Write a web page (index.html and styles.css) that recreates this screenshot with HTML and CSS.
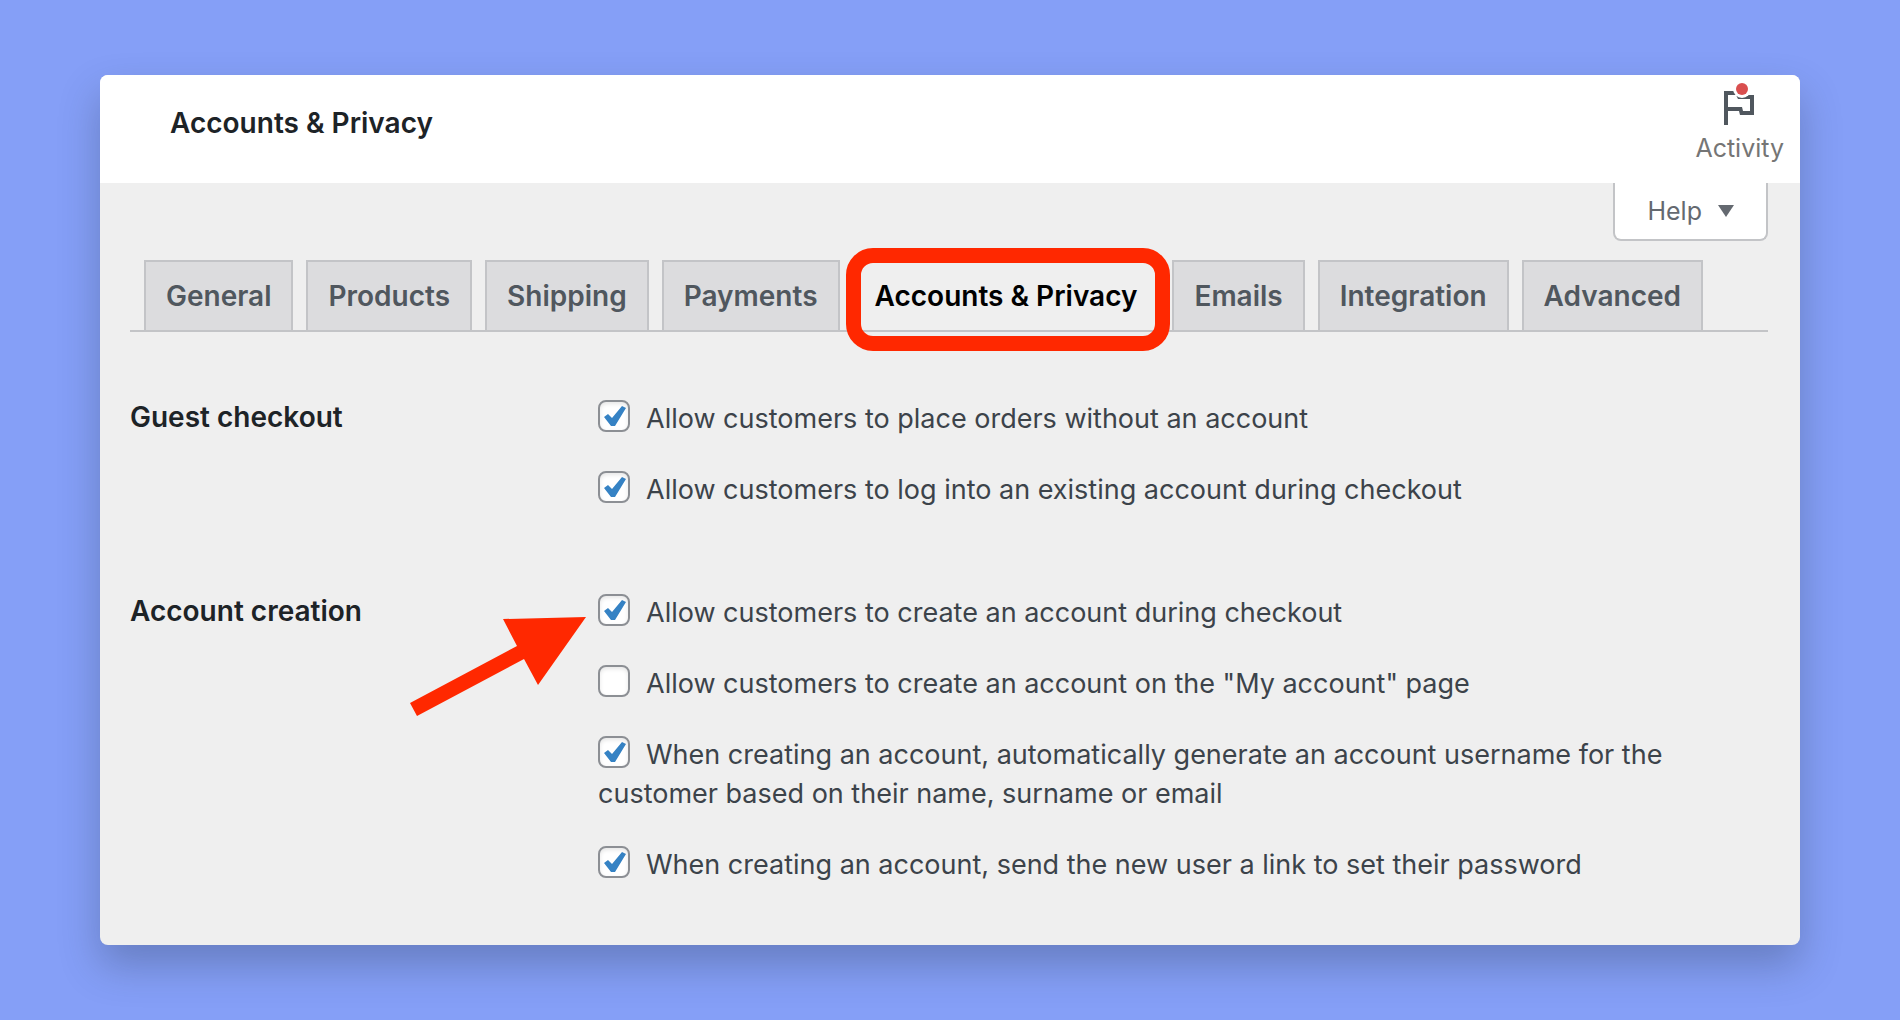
FILE: index.html
```html
<!DOCTYPE html>
<html lang="en">
<head>
    <meta charset="UTF-8">
    <meta name="viewport" content="width=device-width, initial-scale=1.0">
    <title>Accounts &amp; Privacy</title>
    <link rel="stylesheet" href="styles.css">
</head>
<body>
    <main class="panel">
        <header class="panel-header">
            <h1>Accounts &amp; Privacy</h1>
            <button type="button" class="activity">
                <svg class="activity-icon" width="40" height="44" viewBox="0 0 40 44" aria-hidden="true">
                    <path d="M4 10H18L20 14H34V34H20L19 30H8V44H4ZM8 14V26H22L23 30H30V18H18L16 14Z" fill="#50575e" fill-rule="evenodd"/>
                    <circle cx="22" cy="8" r="9" fill="#fff"/>
                    <circle cx="22" cy="8" r="6" fill="#d94f4f"/>
                </svg>
                Activity
            </button>
        </header>
        <div class="content">
            <div class="help-bar">
                <button type="button" class="help">
                    Help
                    <svg width="16" height="12" viewBox="0 0 16 12" aria-hidden="true">
                        <path d="M0 0H16L8 12Z" fill="#646970"/>
                    </svg>
                </button>
            </div>
            <nav class="tabs">
                <a href="#" class="tab">General</a>
                <a href="#" class="tab">Products</a>
                <a href="#" class="tab">Shipping</a>
                <a href="#" class="tab">Payments</a>
                <a href="#" class="tab active">Accounts &amp; Privacy</a>
                <a href="#" class="tab">Emails</a>
                <a href="#" class="tab">Integration</a>
                <a href="#" class="tab">Advanced</a>
            </nav>
            <form class="settings">
                <section class="setting">
                    <h2>Guest checkout</h2>
                    <div class="options">
                        <label for="guest-order"><input type="checkbox" id="guest-order" checked>Allow customers to place orders without an account</label>
                        <label for="guest-login"><input type="checkbox" id="guest-login" checked>Allow customers to log into an existing account during checkout</label>
                    </div>
                </section>
                <section class="setting">
                    <h2>Account creation</h2>
                    <div class="options">
                        <svg class="arrow" width="176" height="100" viewBox="0 0 176 100" aria-hidden="true">
                            <path d="M176 0L93 2L107 29L0 86L7 99L114 42L128 68Z" fill="#ff2800"/>
                        </svg>
                        <label for="create-checkout"><input type="checkbox" id="create-checkout" checked>Allow customers to create an account during checkout</label>
                        <label for="create-my-account"><input type="checkbox" id="create-my-account">Allow customers to create an account on the "My account" page</label>
                        <label for="auto-username"><input type="checkbox" id="auto-username" checked>When creating an account, automatically generate an account username for the customer based on their name, surname or email</label>
                        <label for="send-link"><input type="checkbox" id="send-link" checked>When creating an account, send the new user a link to set their password</label>
                    </div>
                </section>
            </form>
        </div>
    </main>
</body>
</html>
```
FILE: styles.css
```css
* {
    box-sizing: border-box;
}
body {
    font-family: Inter, sans-serif;
    font-size: 27px;
    line-height: 39px;
    color: #3c434a;
    background-color: #859ff7;
    margin: 0;
    padding: 75px 100px;
}
h1, h2 {
    margin: 0;
    font-size: 28px;
    font-weight: 600;
    line-height: 36px;
    color: #1d2327;
}
button {
    font-family: inherit;
    font-size: 25px;
    background: none;
    border: none;
    padding: 0;
    cursor: pointer;
}
.panel {
    background: #efefef;
    border-radius: 8px;
    box-shadow: 0 20px 40px rgba(40, 55, 80, 0.32);
}
.panel-header {
    display: flex;
    justify-content: space-between;
    background: #ffffff;
    border-radius: 8px 8px 0 0;
    height: 108px;
    padding: 6px 16px 0 70px;
}
.panel-header h1 {
    padding-top: 24px;
}
.activity {
    display: flex;
    flex-direction: column;
    align-items: center;
    align-self: flex-start;
    line-height: 46px;
    color: #757575;
}
.content {
    padding: 0 32px 61px 30px;
}
.help-bar {
    display: flex;
    justify-content: flex-end;
}
.help {
    display: flex;
    align-items: center;
    gap: 16px;
    height: 58px;
    padding: 0 32px;
    background: #ffffff;
    border: 2px solid #c3c4c7;
    border-top: none;
    border-radius: 0 0 8px 8px;
    color: #646970;
}
.tabs {
    display: flex;
    gap: 13px;
    margin-top: 19px;
    padding-left: 14px;
    border-bottom: 2px solid #c3c4c7;
}
.tab {
    position: relative;
    padding: 11px 20px;
    font-size: 28px;
    line-height: 46px;
    font-weight: 600;
    color: #50575e;
    background: #dcdcde;
    border: 2px solid #c3c4c7;
    border-bottom: none;
    text-decoration: none;
    white-space: nowrap;
}
.tab.active {
    color: #000000;
    background: #efefef;
    border-color: #efefef;
}
/* highlight ring over the current tab */
.tab.active::after {
    content: "";
    position: absolute;
    inset: -14px -13px -21px -9px;
    border: 15px solid #ff2800;
    border-radius: 27px;
    z-index: 1;
}
.settings {
    padding-top: 67px;
}
.setting {
    display: grid;
    grid-template-columns: 468px 1fr;
    margin-bottom: 84px;
}
.setting:last-child {
    margin-bottom: 0;
}
.options {
    position: relative;
    display: flex;
    flex-direction: column;
    gap: 32px;
}
input[type="checkbox"] {
    appearance: none;
    width: 32px;
    height: 32px;
    margin: -10px 16px 0 0;
    vertical-align: middle;
    background: #ffffff;
    border: 2px solid #8c8f94;
    border-radius: 8px;
    box-shadow: inset 0 2px 4px rgba(0, 0, 0, 0.1);
}
input[type="checkbox"]:checked {
    background: #ffffff url("data:image/svg+xml,%3Csvg xmlns='http://www.w3.org/2000/svg' viewBox='0 0 28 28'%3E%3Cpath d='M4 15L8 12L12 16L22 4L26 6L15 24H11Z' fill='%233582c4'/%3E%3C/svg%3E") center no-repeat;
}
.arrow {
    position: absolute;
    top: 24px;
    left: -188px;
}
```
